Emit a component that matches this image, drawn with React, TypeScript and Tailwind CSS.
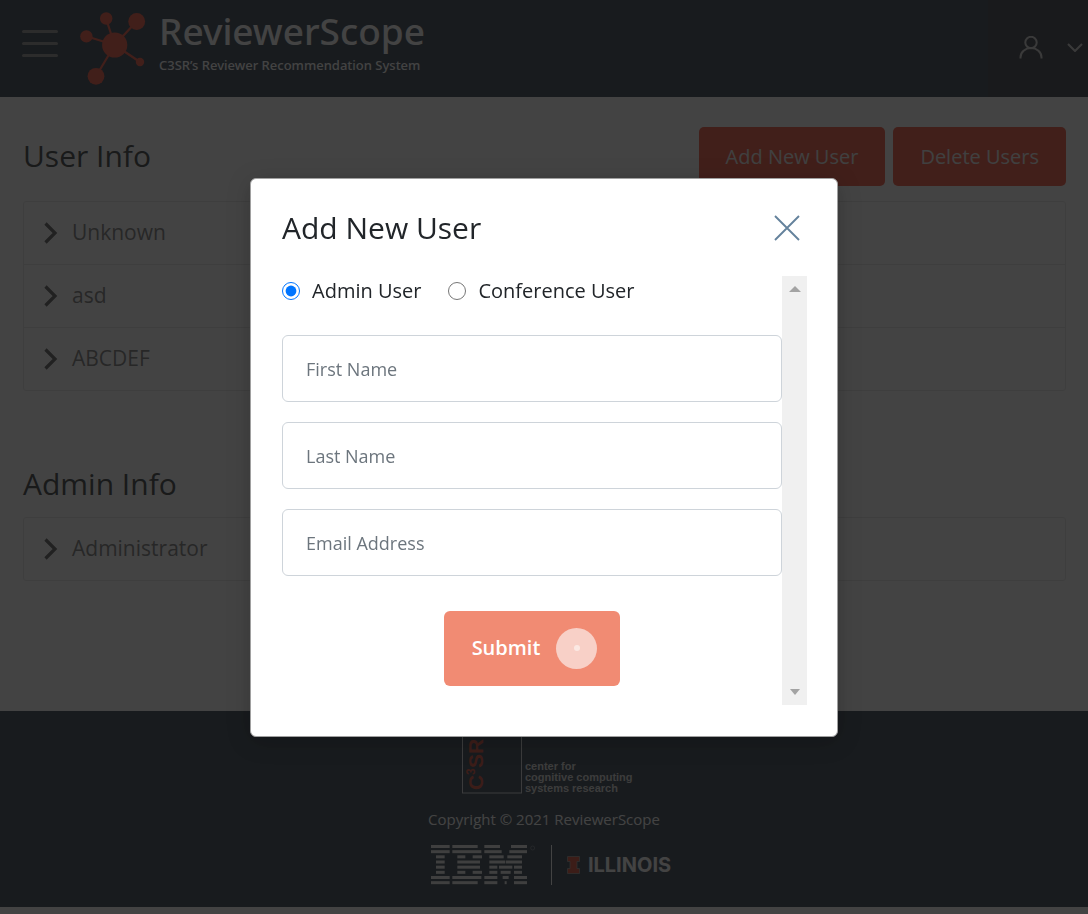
import React, { useState } from "react";

const BAR = "block h-[3px] w-full rounded-full bg-[#848484]";

function Molecule() {
  return (
    <svg className="h-[76px] w-[68px] shrink-0" viewBox="79 11 68 76" fill="#f54027" stroke="#f54027" aria-hidden="true">
      <g strokeWidth="2.2">
        <path d="M114.7 45 106 18.5M114.7 45 136.5 21.5M114.7 45 86.3 36.3M114.7 45 96 76.3M114.7 45 140 62" />
      </g>
      <g stroke="none">
        <circle cx="114.7" cy="45" r="12.6" />
        <circle cx="106.2" cy="18.5" r="6.2" />
        <circle cx="136.7" cy="21.5" r="8.4" />
        <circle cx="86.4" cy="36.4" r="6.2" />
        <circle cx="96" cy="76.3" r="8.4" />
        <circle cx="140" cy="62" r="4.2" />
      </g>
    </svg>
  );
}

function Header() {
  return (
    <header className="flex h-[97px] items-stretch justify-between bg-[#1c2c3b] text-white">
      <div className="flex items-start pl-[22px]">
        <button type="button" aria-label="Open menu" className="mt-[30px] flex w-9 flex-col gap-[9px]">
          <span className={BAR} />
          <span className={BAR} />
          <span className={BAR} />
        </button>
        <a href="#home" className="ml-[21px] flex items-start gap-3 pt-[11px]">
          <Molecule />
          <span className="flex flex-col font-['Noto_Sans','Open_Sans',sans-serif]">
            <span className="text-[37px] leading-10 font-medium">ReviewerScope</span>
            <span className="mt-1 text-[13px] leading-5 font-medium">C3SR’s Reviewer Recommendation System</span>
          </span>
        </a>
      </div>
      <button type="button" aria-label="Account menu" className="flex w-[100px] items-center justify-end gap-6 bg-[#232731] pr-[5px] pb-0.5">
        <svg className="h-6 w-6" viewBox="0 0 24 24" fill="none" stroke="#d0d0d0" strokeWidth="2" aria-hidden="true">
          <circle cx="12" cy="6.5" r="5.7" />
          <path d="M1.5 22.5v-1a10.5 9.4 0 0 1 21 0v1" />
        </svg>
        <svg className="h-[9px] w-4" viewBox="0 0 16 9" fill="none" stroke="#d0d0d0" strokeWidth="2" aria-hidden="true">
          <path d="m1 1 7 7 7-7" />
        </svg>
      </button>
    </header>
  );
}

function RowList({ rows }: { rows: string[] }) {
  return (
    <ul className="divide-y divide-[#e4e4e4] rounded-[3px] border border-[#e4e4e4]">
      {rows.map((row) => (
        <li key={row}>
          <button type="button" className="flex h-[62px] w-full items-center gap-[14px] px-5 text-[21px] text-[#6c6c6c]">
            <svg className="h-[22px] w-[14px]" viewBox="0 0 14 22" fill="none" stroke="#4a4a4a" strokeWidth="3.2" aria-hidden="true">
              <path d="m1.5 1.5 9.5 9.5-9.5 9.5" />
            </svg>
            {row}
          </button>
        </li>
      ))}
    </ul>
  );
}

const ACTION = "h-[59px] rounded-[5px] bg-[#f54027] px-[27px] text-xl text-[#eeeeee]";

const IBM_ROWS: number[][][] = [
  [[93, 149], [157, 233], [253, 300], [333, 381]],
  [[93, 149], [157, 244], [253, 305], [328, 381]],
  [[108, 134], [172, 196], [218, 246], [268, 311], [322, 366]],
  [[108, 134], [172, 240], [268, 316], [318, 366]],
  [[108, 134], [172, 240], [268, 292], [297, 337], [342, 366]],
  [[108, 134], [172, 196], [218, 246], [268, 292], [302, 332], [342, 366]],
  [[93, 149], [157, 244], [253, 292], [308, 326], [342, 381]],
  [[93, 149], [157, 233], [253, 292], [314, 320], [342, 381]],
];

function Footer() {
  return (
    <footer className="flex h-[196px] flex-col items-center bg-[#1c2c3b] text-white">
      <div className="flex w-[164px] items-end gap-[3px] pt-3">
        <svg className="h-[71px] w-[60px] shrink-0" viewBox="0 0 60 71" aria-label="C3SR">
          <rect x="0.5" y="0.5" width="59" height="69.5" fill="none" stroke="#ffffff" strokeOpacity="0.8" />
          <g transform="translate(21 67) rotate(-90)" fill="#d8381f" fontFamily="Liberation Sans, sans-serif" fontWeight="700">
            <text fontSize="21">C</text>
            <text x="15" y="-8" fontSize="12">3</text>
            <text x="22" fontSize="21">SR</text>
          </g>
        </svg>
        <p className="font-['Liberation_Sans',sans-serif] text-[11px] leading-[11px] font-bold whitespace-nowrap text-[#d8d8d8]">
          center for
          <br />
          cognitive computing
          <br />
          systems research
        </p>
      </div>
      <p className="mt-[15px] text-[15px] leading-5">Copyright © 2021 ReviewerScope</p>
      <div className="mt-4 flex items-center pl-[14px]">
        <svg className="h-10 w-[105px]" viewBox="93 345 315 120" fill="#e8e8e8" aria-label="IBM">
          {IBM_ROWS.map((row, i) =>
            row.map(([from, to]) => <rect key={`${i}-${from}`} x={from} y={345 + i * 15.5} width={to - from} height="9" />)
          )}
          <circle cx="398" cy="354" r="6" fill="none" stroke="#ffffff" strokeOpacity="0.4" strokeWidth="2" />
        </svg>
        <span className="ml-[15px] h-10 w-px bg-white" />
        <svg className="ml-[15px] h-[18px] w-[13px]" viewBox="0 0 13 18" aria-hidden="true">
          <path d="M.5.5h12v5H10v7h2.5v5H.5v-5H3v-7H.5z" fill="#d8381f" stroke="#a0a0a0" strokeWidth="0.7" />
        </svg>
        <span className="ml-2 font-[Inter,sans-serif] text-xl leading-5 font-bold">ILLINOIS</span>
      </div>
    </footer>
  );
}

function ScrollBar() {
  return (
    <div className="flex w-[25px] shrink-0 flex-col items-center justify-between bg-[#f0f0f0] py-2.5" aria-hidden="true">
      <svg className="h-[6px] w-[12px]" viewBox="0 0 12 6" fill="#a3a3a3">
        <path d="M6 0l6 6H0z" />
      </svg>
      <svg className="h-[6px] w-[10px]" viewBox="0 0 10 6" fill="#a3a3a3">
        <path d="M0 0h10L5 6z" />
      </svg>
    </div>
  );
}

const RADIO = "h-[18px] w-[18px] accent-[#0075ff]";
const FIELDS = [
  { id: "first-name", label: "First Name", type: "text" },
  { id: "last-name", label: "Last Name", type: "text" },
  { id: "email", label: "Email Address", type: "email" },
];

function AddUserDialog() {
  const [kind, setKind] = useState("admin");
  return (
    <div
      role="dialog"
      aria-modal="true"
      aria-labelledby="dialog-title"
      className="w-full max-w-[588px] rounded-md border border-[#a0a0a0] bg-white pr-[30px] pb-[31px] pl-[31px] text-[#212529] shadow-[0_4px_24px_rgba(0,0,0,0.2)]"
    >
      <div className="flex h-[97px] items-center justify-between pt-0.5 pr-1.5">
        <h2 id="dialog-title" className="text-[30px] leading-10">Add New User</h2>
        <button type="button" aria-label="Close" className="p-px">
          <svg className="h-[26px] w-[26px]" viewBox="0 0 26 26" fill="none" stroke="#64829c" strokeWidth="1.9" aria-hidden="true">
            <path d="M1 1l24 24M25 1 1 25" />
          </svg>
        </button>
      </div>
      <div className="flex">
        <form className="flex h-[429px] flex-1 flex-col" onSubmit={(e) => e.preventDefault()}>
          <div className="flex h-[59px] gap-[27px] text-xl leading-[30px]">
            <label className="flex h-[30px] items-center gap-3">
              <input type="radio" name="kind" className={RADIO} checked={kind === "admin"} onChange={() => setKind("admin")} />
              Admin User
            </label>
            <label className="flex h-[30px] items-center gap-3">
              <input type="radio" name="kind" className={RADIO} checked={kind === "conference"} onChange={() => setKind("conference")} />
              Conference User
            </label>
          </div>
          <div className="flex flex-col gap-5">
            {FIELDS.map((f) => (
              <input
                key={f.id}
                id={f.id}
                type={f.type}
                aria-label={f.label}
                placeholder={f.label}
                className="h-[67px] w-full rounded-md border border-[#ced4da] px-[23px] pt-0.5 text-lg placeholder:text-[#6c757d]"
              />
            ))}
          </div>
          <button type="submit" className="mt-[35px] flex h-[75px] items-center gap-4 self-center rounded-md bg-[#f18b73] pr-[23px] pl-7 text-xl font-semibold text-white">
            Submit
            <span className="flex h-[41px] w-[41px] items-center justify-center rounded-full bg-[#f8d0c7]">
              <span className="h-1.5 w-1.5 rounded-full bg-[#fbe8e3]" />
            </span>
          </button>
        </form>
        <ScrollBar />
      </div>
    </div>
  );
}

export default function App() {
  return (
    <div className="min-h-screen bg-white font-['Open_Sans','Noto_Sans',sans-serif]">
      <Header />
      <main className="px-[22px] pt-[30px] pb-[130px] text-[#212529]">
        <section className="pl-px">
          <div className="flex h-[59px] items-center justify-between">
            <h1 className="pb-0.5 text-[30px] leading-10">User Info</h1>
            <div className="flex gap-2">
              <button type="button" className={ACTION}>Add New User</button>
              <button type="button" className={ACTION}>Delete Users</button>
            </div>
          </div>
          <div className="mt-[15px]">
            <RowList rows={["Unknown", "asd", "ABCDEF"]} />
          </div>
        </section>
        <section className="mt-[73px] pl-px">
          <h1 className="text-[30px] leading-10">Admin Info</h1>
          <div className="mt-[13px]">
            <RowList rows={["Administrator"]} />
          </div>
        </section>
      </main>
      <Footer />
      <div className="fixed inset-0 flex items-center justify-center bg-[#171717]/81">
        <AddUserDialog />
      </div>
    </div>
  );
}
